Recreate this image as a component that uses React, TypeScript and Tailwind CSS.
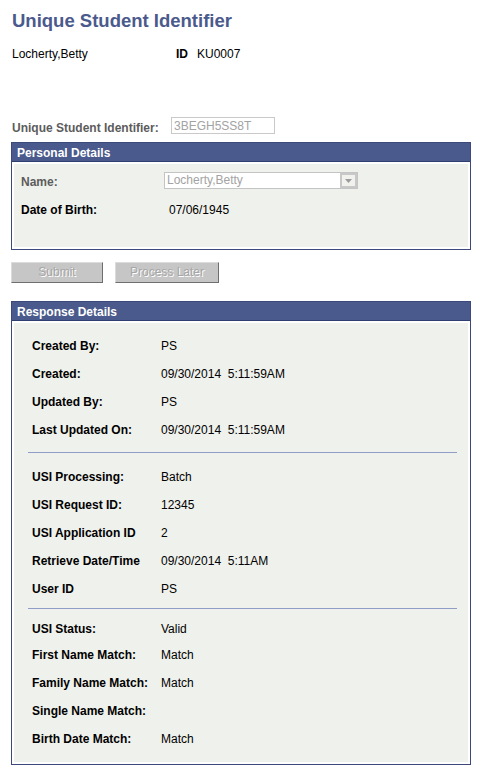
const rows1 = [
  ["Created By:", "PS"],
  ["Created:", "09/30/2014\u00a0\u00a05:11:59AM"],
  ["Updated By:", "PS"],
  ["Last Updated On:", "09/30/2014\u00a0\u00a05:11:59AM"],
];

const rows2 = [
  ["USI Processing:", "Batch"],
  ["USI Request ID:", "12345"],
  ["USI Application ID", "2"],
  ["Retrieve Date/Time", "09/30/2014\u00a0\u00a05:11AM"],
  ["User ID", "PS"],
];

const rows3 = [
  ["First Name Match:", "Match"],
  ["Family Name Match:", "Match"],
  ["Single Name Match:", ""],
  ["Birth Date Match:", "Match"],
];

function Row({ label, value }: { label: string; value: string }) {
  return (
    <div className="flex h-[28px] leading-[30px] pl-[18px]">
      <div className="w-[129px] shrink-0 font-bold text-black">{label}</div>
      <div className="text-black">{value}</div>
    </div>
  );
}

function Separator() {
  return <div className="ml-[14px] mr-[11px] h-px bg-[#8f9dc7]" />;
}

function Button({ label, width }: { label: string; width: string }) {
  return (
    <div
      className={`${width} h-[21px] bg-[#c6c6c6] border-t border-l border-[#dcdcdc] border-r border-b border-r-[#6f6f6f] border-b-[#6f6f6f] text-center leading-[14px] pt-[2px] text-[#a6a6a6] [text-shadow:1px_1px_0_#ffffff]`}
    >
      {label}
    </div>
  );
}

export default function App() {
  return (
    <div className="min-h-[772px] bg-white px-[11px] pt-[10px] pb-[6px] text-[12px] text-black font-['Liberation_Sans',Arial,sans-serif]">
      <h1 className="pl-px h-[22px] leading-[22px] text-[18.5px] font-bold text-[#4b5a8c]">
        Unique Student Identifier
      </h1>

      <div className="mt-[15px] pl-px flex h-[14px] leading-[14px]">
        <div className="w-[164px]">Locherty,Betty</div>
        <div className="font-bold">ID</div>
        <div className="ml-[9px]">KU0007</div>
      </div>

      <div className="mt-[56px] pl-px flex items-start h-[17px]">
        <div className="w-[159px] pt-[4px] leading-[14px] font-bold text-[#5c5c5c]">
          Unique Student Identifier:
        </div>
        <div className="w-[104px] h-[17px] border border-[#c9c9c9] bg-white pl-[2px] leading-[14px] pt-px text-[#a3a3a3]">
          3BEGH5SS8T
        </div>
      </div>

      <section className="mt-[8px] w-[460px] border border-[#3b4a7b] bg-white">
        <div className="h-[19px] bg-[#4a5a8c] border-b border-[#2f3e70] pl-[5px] pt-[3px] leading-[14px] font-bold text-white">
          Personal Details
        </div>
        <div className="m-[2px] h-[83px] bg-[#eff1ec] pl-[7px] pt-[8px]">
          <div className="flex items-start">
            <div className="w-[143px] pt-[3px] leading-[14px] font-bold text-[#5c5c5c]">Name:</div>
            <div className="flex w-[194px] h-[17px] border border-[#c4c4c4] bg-white">
              <div className="flex-1 pl-[2px] leading-[14px] text-[#a3a3a3]">Locherty,Betty</div>
              <div className="w-[17px] h-[15px] border-2 border-[#c8c8c8] bg-[#f1f2ee] flex items-center justify-center">
                <svg width="7" height="4" viewBox="0 0 7 4">
                  <path d="M0 0h7L3.5 4z" fill="#9b9b9b" />
                </svg>
              </div>
            </div>
          </div>
          <div className="mt-[14px] flex h-[14px] leading-[14px]">
            <div className="w-[148px] font-bold">Date of Birth:</div>
            <div>07/06/1945</div>
          </div>
        </div>
      </section>

      <div className="mt-[12px] flex gap-[12px]">
        <Button label="Submit" width="w-[92px]" />
        <Button label="Process Later" width="w-[104px]" />
      </div>

      <section className="mt-[18px] w-[460px] border border-[#3b4a7b] bg-white">
        <div className="h-[19px] bg-[#4a5a8c] border-b border-[#2f3e70] pl-[5px] pt-[3px] leading-[14px] font-bold text-white">
          Response Details
        </div>
        <div className="m-[2px] bg-[#eff1ec] pt-[8px] pb-[10px]">
          {rows1.map(([l, v]) => (
            <Row key={l} label={l} value={v} />
          ))}
          <div className="mt-[9px]">
            <Separator />
          </div>
          <div className="mt-[9px]">
            {rows2.map(([l, v]) => (
              <Row key={l} label={l} value={v} />
            ))}
          </div>
          <div className="mt-[6px]">
            <Separator />
          </div>
          <div className="mt-[5px] flex h-[26px] leading-[30px] pl-[18px]">
            <div className="w-[129px] shrink-0 font-bold">USI Status:</div>
            <div>Valid</div>
          </div>
          {rows3.map(([l, v]) => (
            <Row key={l} label={l} value={v} />
          ))}
        </div>
      </section>
    </div>
  );
}
